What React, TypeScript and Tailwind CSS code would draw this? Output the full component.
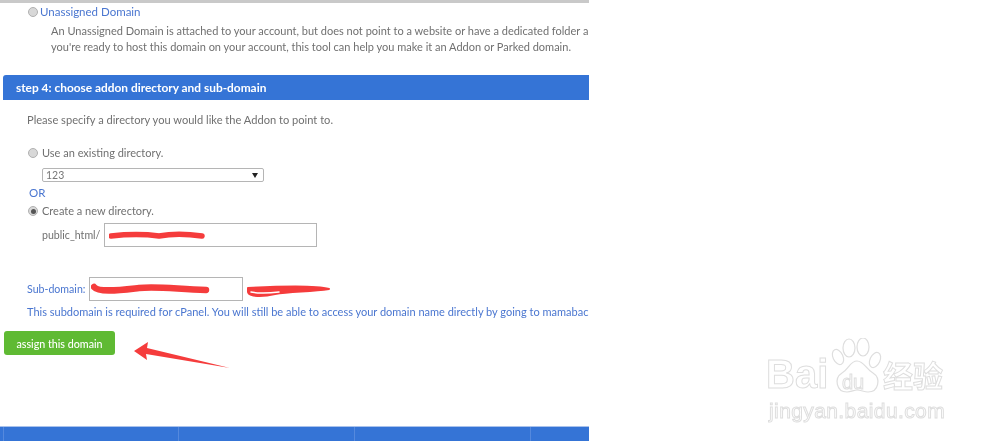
export default function App() {
  return (
    <div className="relative flex h-[444px] w-[1000px] overflow-hidden bg-white font-['Lato',sans-serif] text-[11px] leading-[16px] text-[#707070]">
      <div className="flex h-[441px] w-[589px] flex-col overflow-hidden blur-[0.35px]">
        <div className="h-[3px] shrink-0 bg-[#c9c9c9]" />
        <div className="mt-[1px] flex h-[16px] items-center pl-[28px] text-[#4a76d0]">
          <Radio />
          <span className="ml-[2px] whitespace-nowrap text-[11.5px]">Unassigned Domain</span>
        </div>
        <div className="mt-[3px] pl-[51px]">
          <p className="whitespace-nowrap">An Unassigned Domain is attached to your account, but does not point to a website or have a dedicated folder a</p>
          <p className="whitespace-nowrap">you're ready to host this domain on your account, this tool can help you make it an Addon or Parked domain.</p>
        </div>
        <div className="mt-[20px] ml-[3px] flex h-[25px] shrink-0 items-center rounded-tl-[3px] bg-[#3574d6] pl-[13px] text-[11.9px] font-bold whitespace-nowrap text-white">
          step 4: choose addon directory and sub-domain
        </div>
        <p className="mt-[12px] pl-[27px] text-[11.1px] whitespace-nowrap">Please specify a directory you would like the Addon to point to.</p>
        <div className="mt-[17px] flex h-[16px] items-center pl-[28px]">
          <Radio />
          <span className="ml-[4px]">Use an existing directory.</span>
        </div>
        <div className="mt-[7px] ml-[42px] flex h-[14px] w-[222px] items-center justify-between rounded-[2px] border border-[#b5b5b5] pr-[5px] pl-[3px] text-[10.5px] text-[#777]">
          <span>123</span>
          <span className="h-0 w-0 border-x-[3px] border-t-[5px] border-x-transparent border-t-[#222]" />
        </div>
        <div className="mt-[3px] pl-[29px] text-[11.5px] text-[#4a76d0]">OR</div>
        <div className="mt-[2px] flex h-[16px] items-center pl-[28px]">
          <Radio checked />
          <span className="ml-[4px]">Create a new directory.</span>
        </div>
        <div className="mt-[4px] flex h-[24px] items-center pl-[42px]">
          <span className="w-[62px] text-[10.6px] whitespace-nowrap">public_html/</span>
          <div className="relative h-[24px] w-[213px] border border-[#b5b5b5]">
            <svg className="absolute top-[4px] left-[4px]" width="100" height="14" viewBox="0 0 100 14">
              <path d="M2 8 C20 6 35 6 50 8 C65 5 80 6 93 8" stroke="#f53c3c" strokeWidth="5.5" fill="none" strokeLinecap="round" />
            </svg>
          </div>
        </div>
        <div className="mt-[30px] flex h-[24px] items-center pl-[27px] text-[#4a76d0]">
          <span className="w-[62px] text-[10.6px] whitespace-nowrap">Sub-domain:</span>
          <div className="relative h-[24px] w-[154px] border border-[#b5b5b5]">
            <svg className="absolute top-[2px] left-[1px]" width="120" height="18" viewBox="0 0 120 18">
              <path d="M3 7 C8 13 30 10 48 8 C65 6 85 9 115 10" stroke="#f53c3c" strokeWidth="6.5" fill="none" strokeLinecap="round" />
            </svg>
          </div>
          <span className="relative mt-[4px] ml-[2px]">
            <svg width="88" height="16" viewBox="0 0 88 16" className="block">
              <path d="M3 9 C4 14 18 14 30 11 C45 8 65 9 84 6 C70 2 40 3 3 5 Z" fill="#f53c3c" stroke="#f53c3c" strokeWidth="2" strokeLinejoin="round" />
              <path d="M6 9 C16 11 26 10 34 9" stroke="#ffffff" strokeWidth="1.5" fill="none" strokeLinecap="round" />
            </svg>
          </span>
        </div>
        <p className="mt-[3px] pl-[27px] whitespace-nowrap text-[#4a76d0]">This subdomain is required for cPanel. You will still be able to access your domain name directly by going to mamabac</p>
        <div className="mt-[11px] ml-[4px] flex h-[24px] w-[111px] shrink-0 items-center justify-center rounded-[3px] bg-[#5fba33] pt-[1px] text-[10.7px] font-medium text-white">
          assign this domain
        </div>
        <div className="mt-auto flex h-[15px] shrink-0 border-t border-[#a9c2ec] bg-[#3574d6]">
          <div className="w-[4px] border-r border-[#5589dd]" />
          <div className="w-[175px] border-r border-[#5589dd]" />
          <div className="w-[176px] border-r border-[#5589dd]" />
          <div className="w-[176px] border-r border-[#5589dd]" />
        </div>
      </div>

      <svg className="absolute top-[340px] left-[130px]" width="105" height="32" viewBox="0 0 105 32">
        <path d="M4 11 L18 2 L17 8 L100 28 L16 14 L17 20 Z" fill="#f53c3c" />
      </svg>

      <div className="absolute top-[334px] left-[766px] h-[90px] w-[190px] text-white blur-[0.3px] [-webkit-text-stroke:1px_#dedede]">
        <span className="absolute top-[18px] left-0 font-['Liberation_Sans',sans-serif] text-[40px] leading-[44px] font-bold">Bai</span>
        <svg className="absolute top-[4px] left-[64px]" width="52" height="56" viewBox="0 0 52 56" fill="white" stroke="#dedede" strokeWidth="1.2">
          <ellipse cx="8" cy="19" rx="5" ry="8" transform="rotate(-25 8 19)" />
          <ellipse cx="19" cy="10" rx="6" ry="9" />
          <ellipse cx="33" cy="9" rx="6" ry="9" />
          <ellipse cx="45" cy="22" rx="5" ry="8" transform="rotate(25 45 22)" />
          <path d="M27 23 C20 23 19 31 12 35 C4 40 6 54 17 54 C21 54 24 52 27 52 C31 52 34 54 38 54 C49 54 51 40 43 35 C36 31 34 23 27 23 Z" />
        </svg>
        <span className="absolute top-[36px] left-[76px] font-['Liberation_Sans',sans-serif] text-[20px] leading-[24px]">du</span>
        <span className="absolute top-[23px] left-[117px] font-['Noto_Sans_CJK_SC',sans-serif] text-[30px] leading-[34px] font-bold whitespace-nowrap">经验</span>
        <span className="absolute top-[65px] left-[3px] font-['Liberation_Sans',sans-serif] text-[21px] leading-[24px] tracking-[0.4px] whitespace-nowrap">jingyan.baidu.com</span>
      </div>
    </div>
  );
}

function Radio({ checked = false }: { checked?: boolean }) {
  return (
    <span className="flex h-[10px] w-[10px] shrink-0 items-center justify-center rounded-full border border-[#b0b0b0] bg-[#d8d8d8]">
      {checked && <span className="h-[5px] w-[5px] rounded-full bg-[#555]" />}
    </span>
  );
}
